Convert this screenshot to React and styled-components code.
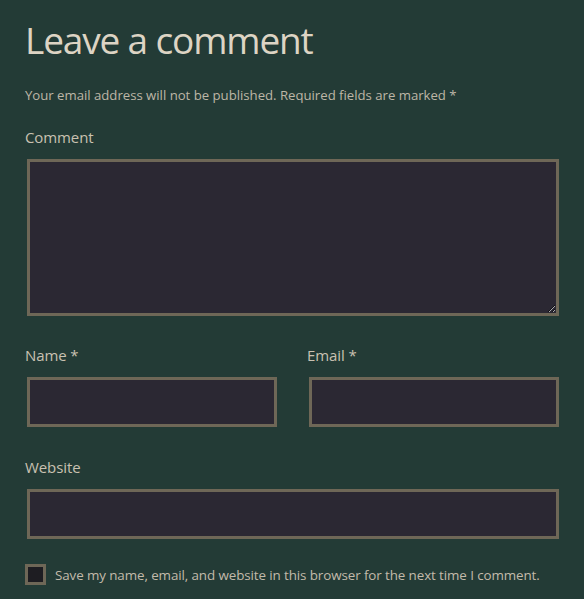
import React from 'react'
import styled, { createGlobalStyle } from 'styled-components'

const GlobalStyle = createGlobalStyle`
  html, body {
    margin: 0;
    padding: 0;
    background: #233b36;
  }
  body {
    font-family: 'Open Sans', 'Noto Sans', sans-serif;
    color: #cfc6b6;
  }
`

const Form = styled.form`
  width: 534px;
  padding: 14px 25px 0 25px;
`

const Title = styled.h2`
  margin: 0;
  font-family: 'Open Sans', sans-serif;
  font-weight: 400;
  font-size: 37px;
  line-height: 52px;
  color: #ddd4c4;
  letter-spacing: -1.15px;
`

const Notes = styled.p`
  margin: 20px 0 0;
  font-size: 13.2px;
  line-height: 18px;
  color: #bdb6a6;
  letter-spacing: -0.02px;
  white-space: nowrap;
`

const Field = styled.div`
  display: flex;
  flex-direction: column;
  margin-top: ${({ $top }) => $top}px;
`

const Label = styled.label`
  font-size: 15px;
  line-height: 20px;
  color: #c9c1b1;
  letter-spacing: -0.1px;
  margin-bottom: ${({ $gap }) => $gap}px;
`

const boxStyle = `
  box-sizing: border-box;
  margin: 0 0 0 2px;
  width: calc(100% - 2px);
  background: #2b2833;
  border: 3px solid #6e6757;
  outline: none;
  color: #ddd;
  font-family: inherit;
  padding: 0;
`

const TextArea = styled.textarea`
  ${boxStyle}
  height: 157px;
  display: block;
  resize: vertical;
`

const Input = styled.input`
  ${boxStyle}
  height: 50px;
  display: block;
`

const Row = styled.div`
  display: grid;
  grid-template-columns: 1fr 1fr;
  column-gap: 30px;
`

const Consent = styled.div`
  display: flex;
  align-items: center;
  gap: 9px;
  margin-top: 25px;
`

const Box = styled.span`
  box-sizing: border-box;
  width: 21px;
  height: 21px;
  background: #1e1d22;
  border: 3px solid #6e6757;
  flex-shrink: 0;
`

const ConsentText = styled.span`
  font-size: 13.4px;
  line-height: 18px;
  color: #c2baaa;
  letter-spacing: -0.1px;
  white-space: nowrap;
`

export default function App() {
  return (
    <>
      <GlobalStyle />
      <Form onSubmit={(e) => e.preventDefault()}>
        <Title>Leave a comment</Title>
        <Notes>Your email address will not be published. Required fields are marked *</Notes>
        <Field $top={23}>
          <Label $gap={12}>Comment</Label>
          <TextArea />
        </Field>
        <Row>
          <Field $top={29}>
            <Label $gap={12}>Name *</Label>
            <Input />
          </Field>
          <Field $top={29}>
            <Label $gap={12}>Email *</Label>
            <Input />
          </Field>
        </Row>
        <Field $top={30}>
          <Label $gap={12}>Website</Label>
          <Input />
        </Field>
        <Consent>
          <Box />
          <ConsentText>Save my name, email, and website in this browser for the next time I comment.</ConsentText>
        </Consent>
      </Form>
    </>
  )
}
